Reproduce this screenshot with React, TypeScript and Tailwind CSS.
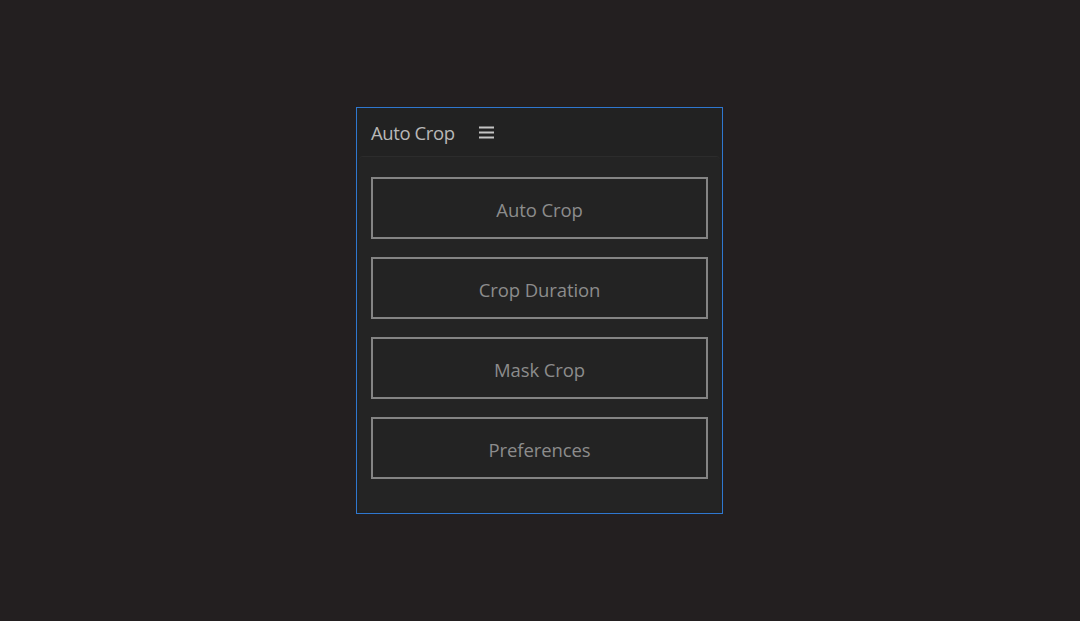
export default function App() {
  const buttons = ['Auto Crop', 'Crop Duration', 'Mask Crop', 'Preferences'];

  return (
    <div className="w-[1080px] h-[621px] bg-[#231f20] flex items-start justify-center pt-[107px] pr-[1px]" style={{ fontFamily: '"Open Sans", "Noto Sans", sans-serif' }}>
      <div className="w-[367px] h-[407px] border border-[#2f77cf] bg-[#222222] flex flex-col">
        {/* Header */}
        <div className="h-[48px] shrink-0 flex items-center pl-[14px] gap-[24px]">
          <span className="text-[18.5px] text-[#b8b8b8] tracking-[-0.4px] mt-[2px]">Auto Crop</span>
          <svg width="15" height="13" viewBox="0 0 15 13" className="mt-[1px]">
            <rect x="0" y="0.5" width="15" height="2" fill="#c4c4c4" />
            <rect x="0" y="5.5" width="15" height="2" fill="#c4c4c4" />
            <rect x="0" y="10.5" width="15" height="2" fill="#c4c4c4" />
          </svg>
        </div>

        {/* Content */}
        <div className="flex-1 mx-[2px] mb-[2px] rounded-t-[4px] bg-[#242424] border-t border-[#2c2c2c] px-[12px] pt-[20px] flex flex-col gap-[18px]">
          {buttons.map((label) => (
            <button
              key={label}
              className="h-[62px] w-full border-2 border-[#848484] bg-[#232323] text-[18.5px] text-[#8c8c8c] tracking-[-0.1px] flex items-center justify-center pt-[4px]"
            >
              {label}
            </button>
          ))}
        </div>
      </div>
    </div>
  );
}
